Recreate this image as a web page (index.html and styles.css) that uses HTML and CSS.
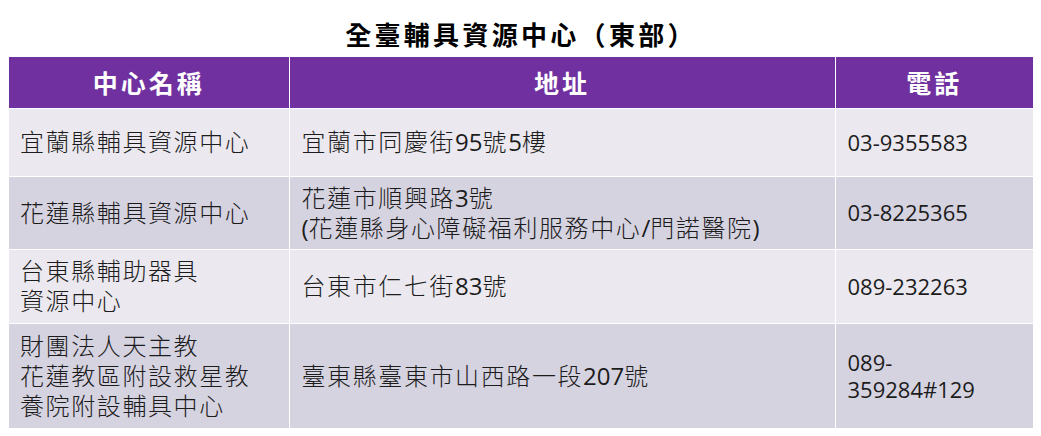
FILE: index.html
```html
<!DOCTYPE html>
<html lang="zh-Hant">
<head>
<meta charset="utf-8">
<title>全臺輔具資源中心（東部）</title>
<link rel="stylesheet" href="styles.css">
</head>
<body>
<div class="page">
  <h1 class="title">全臺輔具資源中心（東部）</h1>
  <table class="centers">
    <colgroup>
      <col class="c-name">
      <col class="c-addr">
      <col class="c-tel">
    </colgroup>
    <thead>
      <tr class="head">
        <th>中心名稱</th>
        <th>地址</th>
        <th>電話</th>
      </tr>
    </thead>
    <tbody>
      <tr class="r1 light">
        <td>宜蘭縣輔具資源中心</td>
        <td>宜蘭市同慶街<span class="num">95</span>號<span class="num">5</span>樓</td>
        <td class="tel">03-9355583</td>
      </tr>
      <tr class="r2 dark">
        <td>花蓮縣輔具資源中心</td>
        <td>花蓮市順興路<span class="num">3</span>號<br><span class="num">(</span>花蓮縣身心障礙福利服務中心<span class="num">/</span>門諾醫院<span class="num">)</span></td>
        <td class="tel">03-8225365</td>
      </tr>
      <tr class="r3 light">
        <td>台東縣輔助器具<br>資源中心</td>
        <td>台東市仁七街<span class="num">83</span>號</td>
        <td class="tel">089-232263</td>
      </tr>
      <tr class="r4 dark">
        <td>財團法人天主教<br>花蓮教區附設救星教<br>養院附設輔具中心</td>
        <td>臺東縣臺東市山西路一段<span class="num">207</span>號</td>
        <td class="tel">089-<br>359284#129</td>
      </tr>
    </tbody>
  </table>
</div>
</body>
</html>
```
FILE: styles.css
```css
html, body {
  margin: 0;
  padding: 0;
  background: #ffffff;
}

.page {
  width: 1024px;
  padding: 12px 0 0 9px;
  font-family: "Open Sans", "Noto Sans CJK TC", sans-serif;
  color: #1c1c1c;
}

.title {
  margin: 0;
  height: 45px;
  line-height: 44px;
  text-align: center;
  font-family: "Noto Sans CJK TC", sans-serif;
  font-size: 26px;
  font-weight: 700;
  letter-spacing: 3.3px;
  color: #000000;
}

.centers {
  width: 1024px;
  table-layout: fixed;
  border-collapse: collapse;
}

.c-name { width: 280px; }
.c-addr { width: 546px; }
.c-tel  { width: 198px; }

.centers th,
.centers td {
  border: 1px solid #ffffff;
  padding: 0 4px 0 11px;
  vertical-align: middle;
}

.centers tr > *:first-child { border-left: none; }
.centers tr > *:last-child { border-right: none; }
.centers thead th { border-top: none; }

.head {
  height: 51px;
  background: #7030a0;
}

.head th {
  padding: 0;
  text-align: center;
  font-family: "Noto Sans CJK TC", sans-serif;
  font-size: 25px;
  font-weight: 700;
  letter-spacing: 3px;
  color: #ffffff;
}

.centers td {
  font-size: 24px;
  font-weight: 300;
  line-height: 30px;
  letter-spacing: 1.6px;
  text-align: left;
}

.num {
  font-size: 24px;
  letter-spacing: 0;
  font-weight: 400;
}

.centers td:nth-child(2) { padding-left: 12px; }
.centers td.tel {
  padding-left: 12px;
  font-size: 22px;
  line-height: 27px;
  letter-spacing: 0;
  font-weight: 400;
}

.light { background: #ebe9ef; }
.dark { background: #d6d3e1; }

.r1 { height: 68px; }
.r2 { height: 73px; }
.r3 { height: 74px; }
.r4 { height: 105px; }
```
